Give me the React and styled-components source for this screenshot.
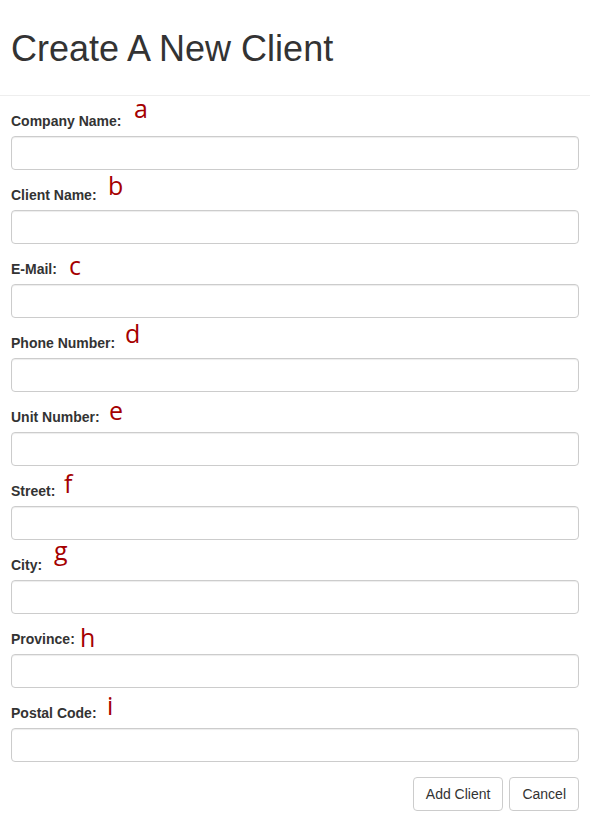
import React from "react";
import styled, { createGlobalStyle } from "styled-components";

const GlobalStyle = createGlobalStyle`
  * {
    box-sizing: border-box;
  }

  body {
    margin: 0;
    background: #fff;
    color: #333;
    font-family: "Liberation Sans", Arial, Helvetica, sans-serif;
    font-size: 14px;
    line-height: 1.42857;
  }
`;

const Page = styled.div`
  width: 590px;
`;

const Header = styled.div`
  padding: 29px 11px 26px;
  border-bottom: 1px solid #eee;
`;

const Title = styled.h1`
  margin: 0;
  font-size: 36px;
  font-weight: 500;
  line-height: 1.1;
  color: #333;
`;

const Form = styled.form`
  padding: 15px 11px 0;
`;

const FormGroup = styled.div`
  position: relative;
  display: flex;
  flex-direction: column;
  margin-bottom: 15px;
`;

const Label = styled.label`
  display: block;
  margin-bottom: 5px;
  font-weight: bold;
  font-size: 14px;
  line-height: 20px;
  color: #333;
`;

const Marker = styled.span`
  position: absolute;
  left: ${(p) => p.$x}px;
  top: ${(p) => p.$y}px;
  font-family: "Open Sans", "Noto Sans", sans-serif;
  font-size: 25px;
  line-height: 25px;
  color: #a50000;
  pointer-events: none;
`;

const Input = styled.input`
  display: block;
  width: 100%;
  height: 34px;
  padding: 6px 12px;
  font-family: inherit;
  font-size: 14px;
  color: #555;
  background: #fff;
  border: 1px solid #ccc;
  border-radius: 4px;
  box-shadow: inset 0 1px 1px rgba(0, 0, 0, 0.075);
  outline: none;
`;

const Actions = styled.div`
  display: flex;
  justify-content: flex-end;
  gap: 6px;
`;

const Button = styled.button`
  height: 34px;
  padding: 6px 12px;
  font-family: inherit;
  font-size: 14px;
  line-height: 20px;
  color: #333;
  background: #fff;
  border: 1px solid #ccc;
  border-radius: 4px;
  cursor: pointer;
`;

const fields = [
  { id: "company", label: "Company Name:", mark: "a", x: 123, y: -15 },
  { id: "client", label: "Client Name:", mark: "b", x: 97, y: -12 },
  { id: "email", label: "E-Mail:", mark: "c", x: 58, y: -6 },
  { id: "phone", label: "Phone Number:", mark: "d", x: 114, y: -12 },
  { id: "unit", label: "Unit Number:", mark: "e", x: 98, y: -9 },
  { id: "street", label: "Street:", mark: "f", x: 53, y: -10 },
  { id: "city", label: "City:", mark: "g", x: 43, y: -17 },
  { id: "province", label: "Province:", mark: "h", x: 69, y: -4 },
  { id: "postal", label: "Postal Code:", mark: "i", x: 96, y: -10 },
];

export default function App() {
  return (
    <Page>
      <GlobalStyle />
      <Header>
        <Title>Create A New Client</Title>
      </Header>
      <Form onSubmit={(e) => e.preventDefault()}>
        {fields.map((f) => (
          <FormGroup key={f.id}>
            <Label htmlFor={f.id}>{f.label}</Label>
            <Marker $x={f.x} $y={f.y}>
              {f.mark}
            </Marker>
            <Input id={f.id} type="text" />
          </FormGroup>
        ))}
        <Actions>
          <Button type="submit">Add Client</Button>
          <Button type="button">Cancel</Button>
        </Actions>
      </Form>
    </Page>
  );
}
